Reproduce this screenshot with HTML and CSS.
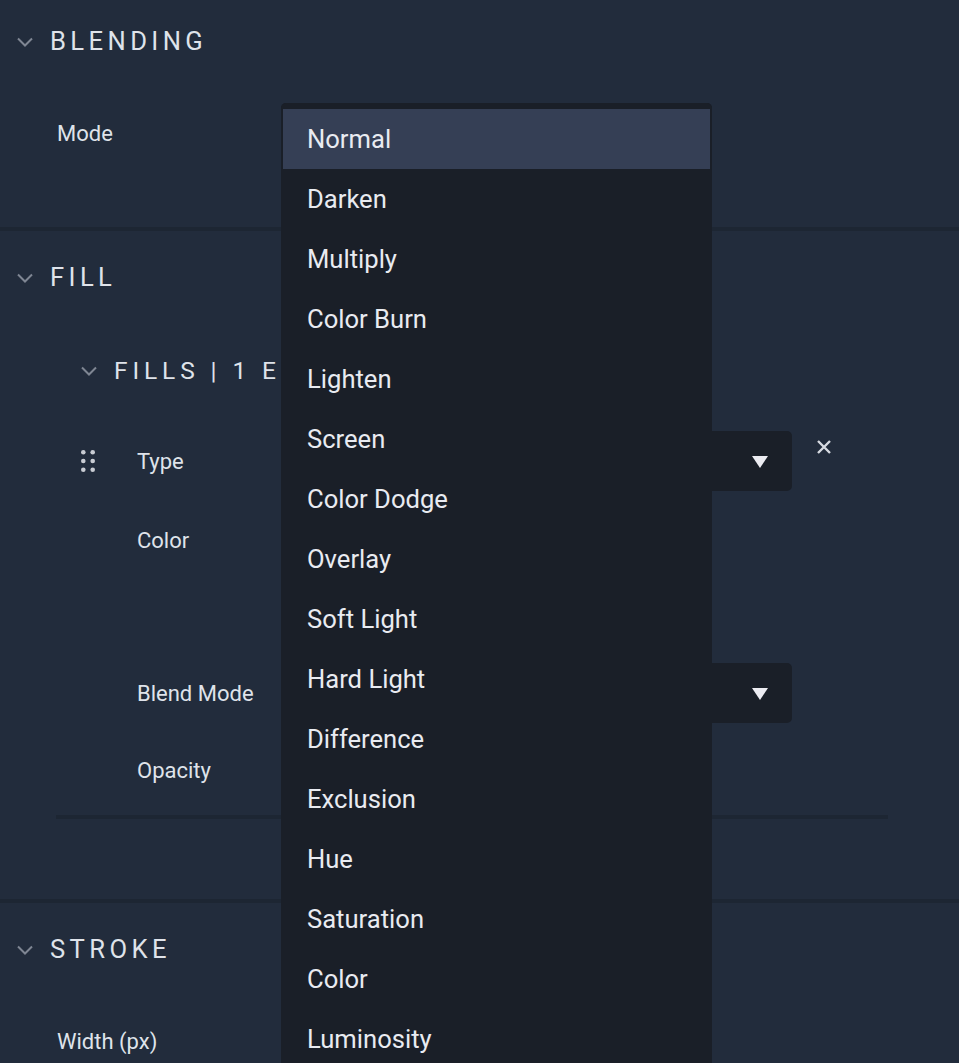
FILE: index.html
```html
<!DOCTYPE html>
<html lang="en">
<head>
<meta charset="utf-8">
<title>Blending panel</title>
<link rel="stylesheet" href="styles.css">
</head>
<body>
<div class="app">
  <section class="section section--first">
    <div class="section-head">
      <svg class="chev" viewBox="0 0 16 10" width="16" height="10"><path d="M1 1.5 L8 8.5 L15 1.5" fill="none" stroke="currentColor" stroke-width="2"/></svg>
      <span class="section-title">BLENDING</span>
    </div>
    <div class="row row--main">
      <span class="label label--main">Mode</span>
      <div class="select select--main"></div>
    </div>
  </section>

  <section class="section section--fill">
    <div class="section-head">
      <svg class="chev" viewBox="0 0 16 10" width="16" height="10"><path d="M1 1.5 L8 8.5 L15 1.5" fill="none" stroke="currentColor" stroke-width="2"/></svg>
      <span class="section-title">FILL</span>
    </div>
    <div class="sub-head">
      <svg class="chev" viewBox="0 0 16 10" width="16" height="10"><path d="M1 1.5 L8 8.5 L15 1.5" fill="none" stroke="currentColor" stroke-width="2"/></svg>
      <span class="sub-title">FILLS | 1 ENTRY</span>
    </div>
    <div class="fill-item">
      <div class="row row--item">
        <div class="handle-slot">
          <svg class="handle" viewBox="0 0 14 22" width="14" height="22">
            <circle cx="2.3" cy="2.3" r="2.3"/><circle cx="11.7" cy="2.3" r="2.3"/>
            <circle cx="2.3" cy="11" r="2.3"/><circle cx="11.7" cy="11" r="2.3"/>
            <circle cx="2.3" cy="19.7" r="2.3"/><circle cx="11.7" cy="19.7" r="2.3"/>
          </svg>
        </div>
        <span class="label label--item">Type</span>
        <div class="select select--item">
          <svg class="caret" viewBox="0 0 16 12" width="16" height="12"><path d="M0 0 H16 L8 12 Z"/></svg>
        </div>
        <svg class="close" viewBox="0 0 16 16" width="16" height="16"><path d="M2 2 L14 14 M14 2 L2 14" stroke="currentColor" stroke-width="2.4" fill="none"/></svg>
      </div>
      <div class="row row--item row--color">
        <div class="handle-slot"></div>
        <span class="label label--item">Color</span>
      </div>
      <div class="row row--item row--blend">
        <div class="handle-slot"></div>
        <span class="label label--item">Blend Mode</span>
        <div class="select select--item">
          <svg class="caret" viewBox="0 0 16 12" width="16" height="12"><path d="M0 0 H16 L8 12 Z"/></svg>
        </div>
      </div>
      <div class="row row--item row--opacity">
        <div class="handle-slot"></div>
        <span class="label label--item">Opacity</span>
      </div>
    </div>
    <div class="divider"></div>
  </section>

  <section class="section section--stroke">
    <div class="section-head">
      <svg class="chev" viewBox="0 0 16 10" width="16" height="10"><path d="M1 1.5 L8 8.5 L15 1.5" fill="none" stroke="currentColor" stroke-width="2"/></svg>
      <span class="section-title">STROKE</span>
    </div>
    <div class="row row--main">
      <span class="label label--main">Width (px)</span>
    </div>
  </section>

  <ul class="menu">
    <li class="menu-item is-active">Normal</li>
    <li class="menu-item">Darken</li>
    <li class="menu-item">Multiply</li>
    <li class="menu-item">Color Burn</li>
    <li class="menu-item">Lighten</li>
    <li class="menu-item">Screen</li>
    <li class="menu-item">Color Dodge</li>
    <li class="menu-item">Overlay</li>
    <li class="menu-item">Soft Light</li>
    <li class="menu-item">Hard Light</li>
    <li class="menu-item">Difference</li>
    <li class="menu-item">Exclusion</li>
    <li class="menu-item">Hue</li>
    <li class="menu-item">Saturation</li>
    <li class="menu-item">Color</li>
    <li class="menu-item">Luminosity</li>
  </ul>
</div>
</body>
</html>
```

FILE: styles.css
```css
* { box-sizing: border-box; }
html, body {
  margin: 0;
  padding: 0;
  background: #222c3c;
  overflow: hidden;
}
body {
  font-family: Roboto, "Liberation Sans", sans-serif;
  color: #dfe3ea;
}
.app {
  position: relative;
  height: 1063px;
  overflow: hidden;
}
.section {
  padding-top: 5px;
  border-bottom: 4px solid #1d2633;
}
.section--first {
  padding-top: 0;
  padding-bottom: 64px;
}
.section--fill {
  padding-bottom: 80px;
}
.section--stroke {
  border-bottom: none;
}
.section-head {
  height: 82px;
  display: flex;
  align-items: center;
  padding-left: 17px;
  gap: 17px;
}
.chev {
  color: #7f8693;
  flex: none;
  margin-top: 1px;
}
.section-title {
  font-size: 25.6px;
  letter-spacing: 4.4px;
  color: #dfe3ea;
}
.sub-head {
  margin-top: 22px;
  height: 60px;
  display: flex;
  align-items: center;
  padding-left: 81px;
  gap: 17px;
  white-space: nowrap;
}
.sub-title {
  font-size: 24.5px;
  letter-spacing: 4.9px;
  color: #dfe3ea;
}
.row {
  display: flex;
  align-items: center;
  height: 60px;
}
.row--main {
  margin-top: 21px;
  padding-left: 57px;
}
.label {
  font-size: 22px;
  color: #dfe3ea;
  white-space: nowrap;
}
.label--main { width: 224px; }
.label--item { width: 144px; }
.select {
  height: 60px;
  background: #1a1f28;
  border-radius: 5px;
  display: flex;
  align-items: center;
  justify-content: flex-end;
  padding-right: 24px;
}
.select--main { width: 431px; }
.select--item { width: 511px; }
.caret { fill: #ececf2; margin-top: 1px; }
.fill-item {
  padding-top: 31px;
}
.row--item {
  padding-left: 81px;
}
.row--item + .row--item { margin-top: 20px; }
.handle-slot {
  width: 56px;
  flex: none;
  display: flex;
  align-items: center;
}
.handle { fill: #c9ccd3; }
.close {
  color: #d7dae1;
  margin-left: 24px;
  align-self: flex-start;
  margin-top: 8px;
}
.row--color {
  height: 132px;
  align-items: flex-start;
}
.row--color .label { line-height: 60px; }
.row--item.row--opacity { margin-top: 17px; }
.divider {
  margin: 15px 0 0 56px;
  width: 832px;
  height: 4px;
  background: #1d2633;
}
.menu {
  position: absolute;
  top: 103px;
  left: 281px;
  width: 431px;
  margin: 0;
  padding: 6px 2px;
  list-style: none;
  background: #1a1f28;
  border-radius: 5px;
}
.menu-item {
  height: 60px;
  line-height: 60px;
  padding-left: 24px;
  font-size: 25.6px;
  color: #e9ebf1;
}
.menu-item.is-active {
  background: #353f55;
}
```
